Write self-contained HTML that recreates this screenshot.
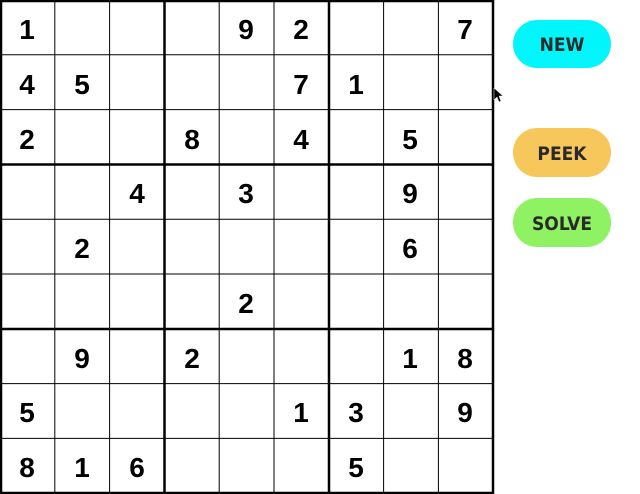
<!DOCTYPE html>
<html><head><style>
html,body{margin:0;padding:0;background:#fff;width:640px;height:494px;overflow:hidden}
svg{display:block}
</style></head><body>
<svg width="640" height="494" xmlns="http://www.w3.org/2000/svg">
<rect width="640" height="494" fill="#fff"/>
<g stroke="#000" stroke-width="1">
<line x1="54.8" y1="0" x2="54.8" y2="494"/><line x1="109.6" y1="0" x2="109.6" y2="494"/>
<line x1="219.2" y1="0" x2="219.2" y2="494"/><line x1="274" y1="0" x2="274" y2="494"/>
<line x1="383.6" y1="0" x2="383.6" y2="494"/><line x1="438.4" y1="0" x2="438.4" y2="494"/>
<line y1="54.8" x1="0" y2="54.8" x2="494"/><line y1="109.6" x1="0" y2="109.6" x2="494"/>
<line y1="219.2" x1="0" y2="219.2" x2="494"/><line y1="274" x1="0" y2="274" x2="494"/>
<line y1="383.6" x1="0" y2="383.6" x2="494"/><line y1="438.4" x1="0" y2="438.4" x2="494"/>
</g>
<g stroke="#000" stroke-width="2.5">
<line x1="1" y1="0" x2="1" y2="494"/><line x1="164.5" y1="0" x2="164.5" y2="494"/>
<line x1="329" y1="0" x2="329" y2="494"/><line x1="493" y1="0" x2="493" y2="494"/>
<line y1="1" x1="0" y2="1" x2="494"/><line y1="164.5" x1="0" y2="164.5" x2="494"/>
<line y1="329" x1="0" y2="329" x2="494"/><line y1="493" x1="0" y2="493" x2="494"/>
</g>
<g font-family="'Liberation Sans', Arial, sans-serif" font-weight="bold" font-size="28" fill="#000" text-anchor="middle">
<text x="27" y="39">1</text><text x="246" y="39">9</text><text x="301" y="39">2</text><text x="465" y="39">7</text>
<text x="27" y="94">4</text><text x="82" y="94">5</text><text x="301" y="94">7</text><text x="356" y="94">1</text>
<text x="27" y="149">2</text><text x="192" y="149">8</text><text x="301" y="149">4</text><text x="410" y="149">5</text>
<text x="137" y="203">4</text><text x="246" y="203">3</text><text x="410" y="203">9</text>
<text x="82" y="258">2</text><text x="410" y="258">6</text>
<text x="246" y="313">2</text>
<text x="82" y="368">9</text><text x="192" y="368">2</text><text x="410" y="368">1</text><text x="465" y="368">8</text>
<text x="27" y="422">5</text><text x="301" y="422">1</text><text x="356" y="422">3</text><text x="465" y="422">9</text>
<text x="27" y="477">8</text><text x="82" y="477">1</text><text x="137" y="477">6</text><text x="356" y="477">5</text>
</g>
<rect x="513" y="20" width="98" height="48" rx="24" fill="#00f6fa"/>
<rect x="513" y="128" width="98" height="49" rx="24" fill="#f8c75b"/>
<rect x="513" y="198" width="98" height="49" rx="24" fill="#8ef262"/>
<g font-family="'DejaVu Sans Condensed','DejaVu Sans',sans-serif" font-weight="bold" font-size="19" fill="#2a2a2a" text-anchor="middle">
<text x="562" y="51">NEW</text>
<text x="562" y="160">PEEK</text>
<text x="562" y="230">SOLVE</text>
</g>
<path d="M494 88 L494 100 L497 97 L499 102 L501 101 L499 96 L503 96 Z" fill="#000" stroke="#fff" stroke-width="0.5"/>
</svg>
</body></html>
